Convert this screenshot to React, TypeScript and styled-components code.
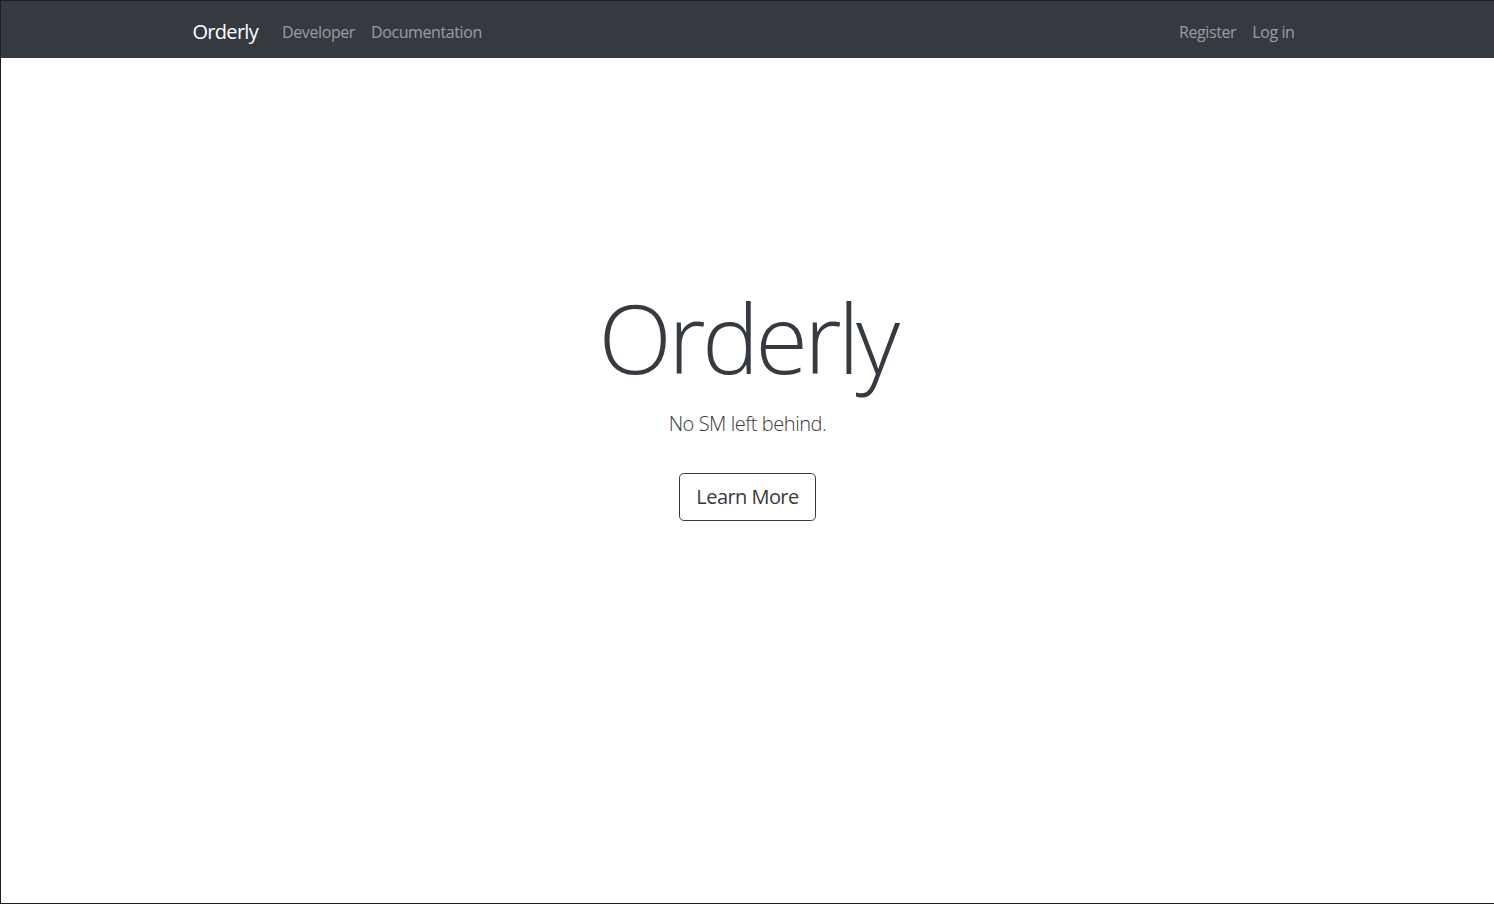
import React from 'react';
import styled, { createGlobalStyle } from 'styled-components';

const GlobalStyle = createGlobalStyle`
  html, body {
    margin: 0;
    padding: 0;
    background: #ffffff;
  }
  body {
    font-family: "Open Sans", "Noto Sans", "Liberation Sans", sans-serif;
    color: #212529;
  }
  * { box-sizing: border-box; }
`;

const Frame = styled.div`
  height: 904px;
  display: flex;
  flex-direction: column;
  border-top: 1px solid #1e1e1e;
  border-left: 1px solid #1e1e1e;
  border-bottom: 1px solid #1e1e1e;
`;

const Navbar = styled.nav`
  height: 57px;
  background-color: #343a40;
  display: flex;
  align-items: center;
  padding-top: 5px;
`;

const Container = styled.div`
  width: 1140px;
  margin: 0 auto;
  padding: 0 15px;
  display: flex;
  align-items: center;
  justify-content: space-between;
`;

const Group = styled.div`
  display: flex;
  align-items: center;
`;

const Brand = styled.a`
  font-size: 20px;
  letter-spacing: -0.7px;
  color: #ffffff;
  margin-right: 16px;
  text-decoration: none;
  line-height: 1.5;
`;

const NavLink = styled.a`
  font-size: 16px;
  letter-spacing: -0.4px;
  padding: 8px;
  color: rgba(255, 255, 255, 0.5);
  text-decoration: none;
  line-height: 1.5;
`;

const Hero = styled.main`
  flex: 1;
  display: flex;
  flex-direction: column;
  align-items: center;
  padding-top: 221px;
`;

const Title = styled.h1`
  margin: 0 0 15px;
  font-size: 96px;
  font-weight: 300;
  letter-spacing: -3.7px;
  line-height: 1.2;
  color: #343a40;
`;

const Lead = styled.p`
  margin: 0 0 16px;
  font-size: 20px;
  font-weight: 300;
  letter-spacing: -0.45px;
  line-height: 1.5;
  color: #343a40;
`;

const OutlineButton = styled.button`
  font-family: inherit;
  font-size: 20px;
  letter-spacing: -0.55px;
  line-height: 1.5;
  padding: 8px 16px;
  border: 1px solid #343a40;
  border-radius: 4.8px;
  background: transparent;
  color: #343a40;
  margin-top: 18px;
`;

export default function App() {
  return (
    <>
      <GlobalStyle />
      <Frame>
        <Navbar>
          <Container>
            <Group>
              <Brand href="#">Orderly</Brand>
              <NavLink href="#">Developer</NavLink>
              <NavLink href="#">Documentation</NavLink>
            </Group>
            <Group>
              <NavLink href="#">Register</NavLink>
              <NavLink href="#">Log in</NavLink>
            </Group>
          </Container>
        </Navbar>
        <Hero>
          <Title>Orderly</Title>
          <Lead>No SM left behind.</Lead>
          <OutlineButton type="button">Learn More</OutlineButton>
        </Hero>
      </Frame>
    </>
  );
}
